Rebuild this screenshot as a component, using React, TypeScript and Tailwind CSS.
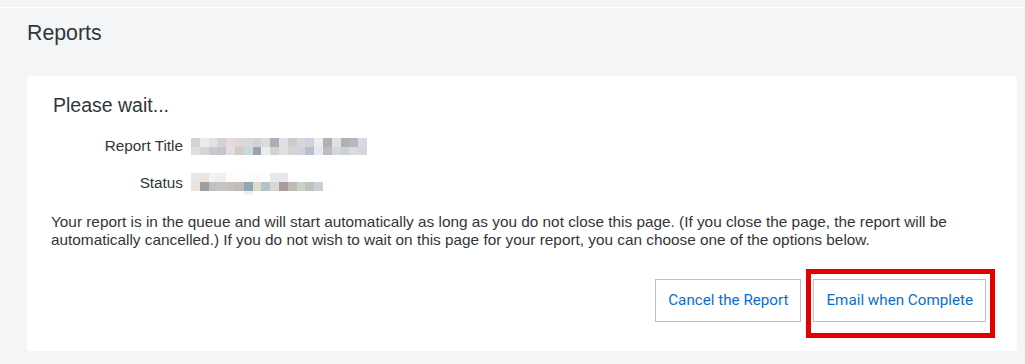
import React from 'react';

const titleBlocks = [
  'bg-[#d3d3d6]', 'bg-[#eeeceb]', 'bg-[#e0e4e8]', 'bg-[#d4d1d9]', 'bg-[#e2dce1]', 'bg-[#dfd6d5]', 'bg-[#d6d8da]', 'bg-[#d0d1d9]', 'bg-[#d9dcdc]', 'bg-[#aab0b3]',
  'bg-[#dde0e5]', 'bg-[#cfcbcd]', 'bg-[#d4d7de]', 'bg-[#cdd3dc]', 'bg-[#f0ebe8]', 'bg-[#b4afb5]', 'bg-[#dfe0e1]', 'bg-[#aeb2b3]', 'bg-[#b8b6ba]', 'bg-[#d7dae3]',
  'bg-[#dfdfe0]', 'bg-[#d5d5d4]', 'bg-[#c7c7ce]', 'bg-[#c4c3ce]', 'bg-[#e6dce3]', 'bg-[#d1cac9]', 'bg-[#c9d9de]', 'bg-[#9aa3ae]', 'bg-[#eaeced]', 'bg-[#d2d2d0]',
  'bg-[#dfdfdc]', 'bg-[#d4d4d6]', 'bg-[#d1d3da]', 'bg-[#bcbdc8]', 'bg-[#e2eaf1]', 'bg-[#bbbbc1]', 'bg-[#d5d7dc]', 'bg-[#cad0d6]', 'bg-[#d9dbde]', 'bg-[#d4d6df]',
];

const statusBlocks = [
  'bg-[#e6e7ed]', 'bg-[#e9e4df]', 'bg-[#f0f4f8]', 'bg-[#f3eeeb]', 'bg-[#fdfdfd]', 'bg-[#fefefe]', 'bg-[#fdfdfd]', 'bg-[#fafafb]', 'bg-[#fefefe]', 'bg-[#e7e7ed]', 'bg-[#e8e6ec]', 'bg-white', 'bg-white', 'bg-white', 'bg-white',
  'bg-[#e9e3de]', 'bg-[#9e9e9f]', 'bg-[#bfc2c1]', 'bg-[#c3c4c3]', 'bg-[#c2c1bd]', 'bg-[#c2bcb5]', 'bg-[#90a7b6]', 'bg-[#dedbce]', 'bg-[#b3c1ca]', 'bg-[#d8d6d4]', 'bg-[#a89c99]', 'bg-[#bfbab3]', 'bg-[#ccd0cd]', 'bg-[#bfc1bd]', 'bg-[#c9cfd8]',
  'bg-white', 'bg-white', 'bg-white', 'bg-white', 'bg-white', 'bg-white', 'bg-[#eef1f5]', 'bg-white', 'bg-white', 'bg-white', 'bg-white', 'bg-white', 'bg-white', 'bg-white', 'bg-white',
];

export default function App() {
  return (
    <div className="min-h-screen bg-[#f4f5f7] font-['Liberation_Sans',Arial,sans-serif] text-[#32363a]">
      <div className="h-[7px]" />
      <div className="border-t border-white pl-[27px] pr-[8px]">
        <h1 className="mt-[13px] text-[21.3px] leading-[25px]">Reports</h1>

        {/* Card */}
        <div className="mt-[30px] rounded-[4px] bg-white px-[23px] pt-[17px] pb-[29px]">
          <h2 className="pl-[3px] text-[19.5px] leading-[24px]">Please wait...</h2>

          <div className="mt-[20px] flex items-start gap-2">
            <div className="w-[133px] text-right text-[15.3px] leading-[18px]">Report Title</div>
            <div className="mt-px grid h-[17px] w-[176px] grid-cols-20 grid-rows-2">
              {titleBlocks.map((c, i) => (
                <div key={i} className={c} />
              ))}
            </div>
          </div>

          <div className="mt-[19px] flex items-start gap-2">
            <div className="w-[133px] text-right text-[15.3px] leading-[18px]">Status</div>
            <div className="-mt-px grid h-[22px] w-[132px] grid-cols-15 grid-rows-[9px_9px_4px]">
              {statusBlocks.map((c, i) => (
                <div key={i} className={c} />
              ))}
            </div>
          </div>

          <p className="mt-[18px] pl-[1px] text-[15.35px] leading-[18px]">
            Your report is in the queue and will start automatically as long as you do not close this page. (If you close the page, the report will be automatically cancelled.) If you do not wish to wait on this page for your report, you can choose one of the options below.
          </p>

          <div className="mt-[30px] flex justify-end gap-[12px] pr-[8px] font-['Roboto',sans-serif]">
            <button className="h-[43px] border border-[#bfbfbf] bg-white px-[12px] text-[15.2px] text-[#0a6ed1]">
              Cancel the Report
            </button>
            <div className="relative">
              <button className="h-[43px] border border-[#bfbfbf] bg-white px-[12px] text-[15.2px] text-[#0a6ed1]">
                Email when Complete
              </button>
              <div className="pointer-events-none absolute -top-[10px] -right-[9px] -bottom-[16px] -left-[7px] border-[5px] border-[#e30000]" />
            </div>
          </div>
        </div>
      </div>
    </div>
  );
}
